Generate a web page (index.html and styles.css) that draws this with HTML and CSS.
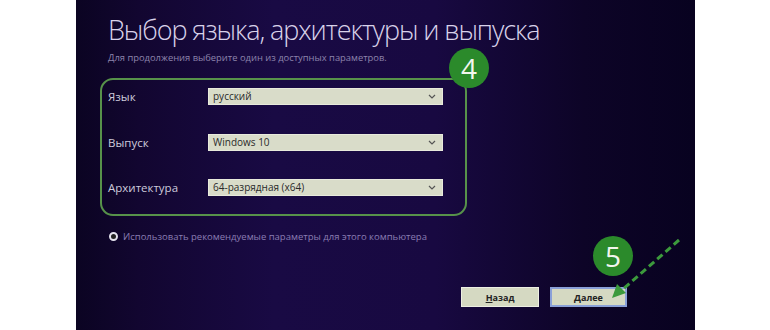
FILE: index.html
```html
<!DOCTYPE html>
<html lang="ru">
<head>
  <meta charset="UTF-8" />
  <title>Выбор языка, архитектуры и выпуска</title>
  <link rel="stylesheet" href="styles.css">
</head>
<body>
  <div class="screen">
    <h1 class="title">Выбор языка, архитектуры и выпуска</h1>
    <p class="subtitle">Для продолжения выберите один из доступных параметров.</p>

    <div class="options">
      <div class="row">
        <span class="label">Язык</span>
        <div class="select">русский
          <svg class="chev" width="8" height="5" viewBox="0 0 8 5"><path d="M1 1l3 3 3-3" fill="none" stroke="#555" stroke-width="1.2"/></svg>
        </div>
      </div>
      <div class="row">
        <span class="label">Выпуск</span>
        <div class="select">Windows 10
          <svg class="chev" width="8" height="5" viewBox="0 0 8 5"><path d="M1 1l3 3 3-3" fill="none" stroke="#555" stroke-width="1.2"/></svg>
        </div>
      </div>
      <div class="row">
        <span class="label">Архитектура</span>
        <div class="select">64-разрядная (x64)
          <svg class="chev" width="8" height="5" viewBox="0 0 8 5"><path d="M1 1l3 3 3-3" fill="none" stroke="#555" stroke-width="1.2"/></svg>
        </div>
      </div>
    </div>

    <div class="radio-row">
      <span class="radio"></span>
      <span>Использовать рекомендуемые параметры для этого компьютера</span>
    </div>

    <div class="actions">
      <button class="btn"><u>Н</u>азад</button>
      <button class="btn btn-next"><u>Д</u>алее</button>
    </div>

    <!-- пометки поверх скриншота -->
    <div class="badge badge-4">4</div>
    <div class="badge badge-5">5</div>
    <svg class="arrow" width="619" height="330" viewBox="0 0 619 330">
      <line x1="603" y1="240" x2="546" y2="290" stroke="#3c9a3c" stroke-width="3" stroke-dasharray="7 4"/>
      <path d="M536 298 L541 284 L550 293 Z" fill="#3c9a3c"/>
    </svg>
  </div>
</body>
</html>
```

FILE: styles.css
```css
body {
  margin: 0;
  background: #fff;
  font-family: "Open Sans", "Noto Sans", sans-serif;
}

.screen {
  position: relative;
  margin-left: 76px;
  width: 619px;
  height: 330px;
  box-sizing: border-box;
  padding: 14px 0 0 32px;
  background: linear-gradient(90deg, #0b0422 0%, #120630 10%, #190a44 32%, #180941 58%, #0d0427 82%, #080220 100%);
  overflow: hidden;
}

.title {
  margin: 0;
  font-size: 27px;
  font-weight: 300;
  line-height: 32px;
  color: #d9d2ea;
  letter-spacing: -1.1px;
}

.subtitle {
  margin: 5px 0 0;
  font-size: 9.4px;
  color: #8d84ac;
}

.options {
  width: 367px;
  height: 138px;
  box-sizing: border-box;
  margin: 14px 0 0 -8px;
  padding: 8px 0 0 6px;
  border: 2px solid #57924a;
  border-radius: 13px;
  display: flex;
  flex-direction: column;
  gap: 28.5px;
}

.row {
  display: flex;
  align-items: center;
  height: 17px;
}

.label {
  width: 100px;
  font-size: 11.5px;
  color: #cdcbdc;
}

.select {
  width: 235px;
  height: 17px;
  box-sizing: border-box;
  padding: 0 6px 0 4px;
  background: #d9dcc9;
  border: 1px solid #e8eadc;
  font-size: 10px;
  line-height: 15px;
  color: #2a2a2a;
  display: flex;
  justify-content: space-between;
  align-items: center;
}

.radio-row {
  display: flex;
  align-items: center;
  gap: 5px;
  margin-top: 14px;
  margin-left: 1px;
  font-size: 9.5px;
  color: #8a7db2;
}

.radio {
  width: 5px;
  height: 5px;
  border: 2px solid #e4e2ee;
  border-radius: 50%;
  background: #222;
}

.actions {
  display: flex;
  justify-content: flex-end;
  gap: 11px;
  margin-top: 44px;
  padding-right: 68px;
}

.btn {
  width: 78px;
  height: 20px;
  padding: 0;
  background: #d5d9c2;
  border: 1px solid #eceee2;
  font-family: "Open Sans", "Noto Sans", sans-serif;
  font-size: 9px;
  font-weight: 700;
  color: #222;
}

.btn-next {
  width: 77px;
  border: 2px solid #8aa0d8;
}

.btn u {
  text-decoration-thickness: 1px;
}

.badge {
  position: absolute;
  width: 40px;
  height: 40px;
  border-radius: 50%;
  background: #2b8a2b;
  color: #f2f6ee;
  font-size: 28px;
  line-height: 40px;
  text-align: center;
}

.badge-4 {
  left: 373px;
  top: 48px;
}

.badge-5 {
  left: 517px;
  top: 236px;
}

.arrow {
  position: absolute;
  left: 0;
  top: 0;
}
```
